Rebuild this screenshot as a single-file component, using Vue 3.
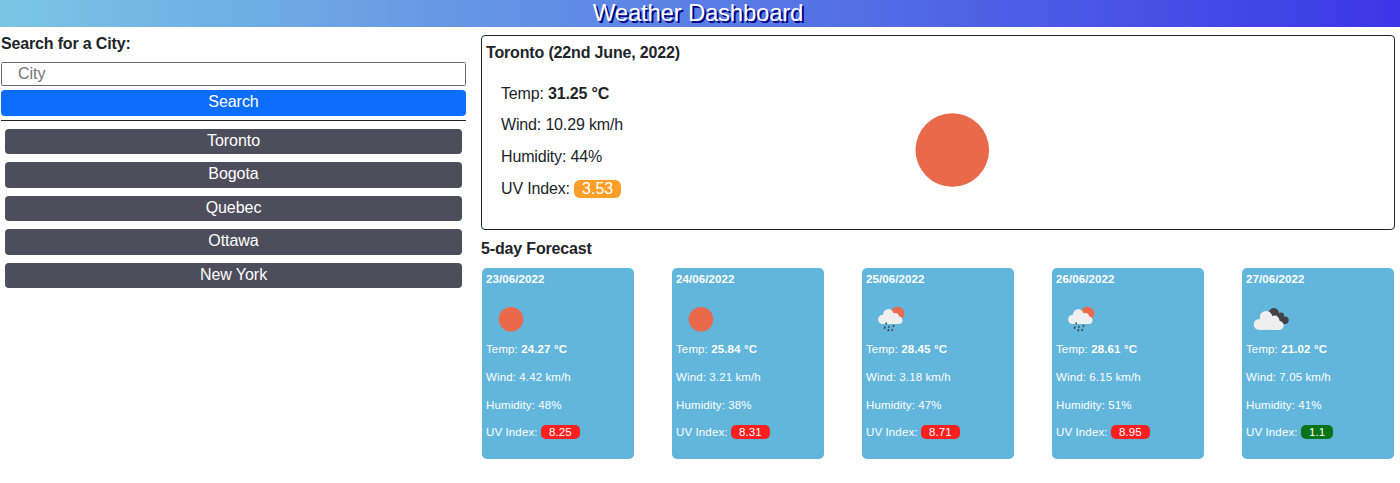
<script setup>
const cities = ['Toronto', 'Bogota', 'Quebec', 'Ottawa', 'New York']

const forecast = [
  { date: '23/06/2022', icon: 'sun', temp: '24.27', wind: '4.42', humidity: 48, uv: '8.25', level: 'high' },
  { date: '24/06/2022', icon: 'sun', temp: '25.84', wind: '3.21', humidity: 38, uv: '8.31', level: 'high' },
  { date: '25/06/2022', icon: 'rain', temp: '28.45', wind: '3.18', humidity: 47, uv: '8.71', level: 'high' },
  { date: '26/06/2022', icon: 'rain', temp: '28.61', wind: '6.15', humidity: 51, uv: '8.95', level: 'high' },
  { date: '27/06/2022', icon: 'clouds', temp: '21.02', wind: '7.05', humidity: 41, uv: '1.1', level: 'low' },
]
</script>

<template>
  <div class="page">
    <header class="header"><h1>Weather Dashboard</h1></header>
    <main class="layout">
      <aside class="sidebar">
        <h2 class="heading">Search for a City:</h2>
        <input class="city-input" type="text" placeholder="City" />
        <button class="search">Search</button>
        <div class="history">
          <button v-for="city in cities" :key="city" class="city">{{ city }}</button>
        </div>
      </aside>

      <div class="content">
        <section class="today">
          <h2 class="heading">Toronto (22nd June, 2022)</h2>
          <div class="today-body">
            <div class="stats">
              <p>Temp: <b>31.25 °C</b></p>
              <p>Wind: 10.29 km/h</p>
              <p>Humidity: 44%</p>
              <p>UV Index: <span class="uv moderate">3.53</span></p>
            </div>
            <svg class="today-icon" viewBox="0 0 75 75"><circle cx="37.3" cy="37" r="36.8" fill="#e96a4a" /></svg>
          </div>
        </section>

        <h2 class="heading forecast-title">5-day Forecast</h2>
        <section class="cards">
          <article v-for="day in forecast" :key="day.date" class="card">
            <h3>{{ day.date }}</h3>
            <svg class="icon" viewBox="0 0 50 50">
              <circle v-if="day.icon === 'sun'" cx="25" cy="25.2" r="12.3" fill="#e96a4a" />
              <g v-else-if="day.icon === 'rain'">
                <circle cx="31.5" cy="19.6" r="6.9" fill="#e96a4a" />
                <g fill="#f0eff0">
                  <circle cx="16.7" cy="25.4" r="4.6" />
                  <circle cx="22.4" cy="20.2" r="5.2" />
                  <circle cx="29.2" cy="22.8" r="3.9" />
                  <circle cx="32.8" cy="26.3" r="3.7" />
                  <path d="M16.7 22h16v8h-16z" />
                </g>
                <path
                  d="M20.5 28.6l-.6 1.6M19.2 32.4l-1 2.4M23.3 31.9l-.7 1.8M22.7 35.2l-.7 2M27.9 30.9l-.8 2M26.6 35l-.8 2"
                  fill="none" stroke="#3d3d3f" stroke-width="1.4"
                />
              </g>
              <g v-else>
                <g fill="#434345">
                  <circle cx="27.8" cy="19.3" r="5.2" />
                  <circle cx="34.9" cy="21.6" r="3.2" />
                  <circle cx="39" cy="26.3" r="3.7" />
                  <path d="M28 20l7-1 3 9 .5 2-6-2z" />
                </g>
                <g fill="#f0eff0">
                  <circle cx="13.2" cy="30.4" r="5.5" />
                  <circle cx="20.1" cy="23.3" r="6.3" />
                  <circle cx="28.7" cy="26.3" r="4.7" />
                  <circle cx="33.3" cy="31.5" r="4.4" />
                  <path d="M13.2 26h20v9.9h-20z" />
                </g>
              </g>
            </svg>
            <div class="stats small">
              <p>Temp: <b>{{ day.temp }} °C</b></p>
              <p>Wind: {{ day.wind }} km/h</p>
              <p>Humidity: {{ day.humidity }}%</p>
              <p>UV Index: <span class="uv" :class="day.level">{{ day.uv }}</span></p>
            </div>
          </article>
        </section>
      </div>
    </main>
  </div>
</template>

<style>
body {
  margin: 0;
  background: #fff;
}
</style>

<style scoped>
* {
  box-sizing: border-box;
}
.page {
  color: #212529;
  font: 16px/24px "Liberation Sans", Arial, sans-serif;
}
h1, h2, h3, p {
  margin: 0;
}
.header {
  height: 27px;
  background: linear-gradient(to right, #7ac6e4, #3b36e6);
  text-align: center;
}
.header h1 {
  padding-right: 4px;
  color: #fff;
  font-size: 24px;
  font-weight: 400;
  letter-spacing: -0.24px;
  line-height: 26px;
  text-shadow: 2px 2px 0 #000080;
}
.layout {
  display: flex;
  gap: 15px;
  padding: 0 5px 0 1px;
}
.sidebar {
  width: 465px;
  padding-top: 5px;
}
.heading {
  font-size: 16px;
  font-weight: 700;
  letter-spacing: -0.16px;
  line-height: 24px;
}
.city-input {
  display: block;
  width: 100%;
  height: 24px;
  margin-top: 6px;
  padding: 0 16px;
  border: 1px solid #6b6b6b;
  border-radius: 1.5px;
  background: #fff;
  font: inherit;
}
.city-input::placeholder {
  color: #757575;
  opacity: 1;
}
button {
  display: block;
  border: 0;
  border-radius: 4px;
  color: #fff;
  font: inherit;
  letter-spacing: -0.05px;
  text-align: center;
}
.search {
  width: 100%;
  height: 26px;
  margin-top: 4px;
  padding: 0 0 2px;
  background: #0d6efd;
}
.history {
  display: flex;
  flex-direction: column;
  gap: 8px;
  margin-top: 4px;
  padding: 7.75px 4px 0;
  border-top: 1px solid #212529;
}
.city {
  height: 25.5px;
  padding: 0 0 1.5px;
  background: #4e4d5c;
}
.content {
  flex: 1;
  padding-top: 8px;
}
.today {
  height: 195px;
  padding: 5px 4px;
  border: 1px solid #212529;
  border-radius: 4px;
}
.today-body {
  display: grid;
  grid-template-columns: 414px 75px;
  padding: 16.7px 0 0 15px;
}
.stats {
  display: grid;
  grid-auto-rows: 31.7px;
  letter-spacing: -0.16px;
}
.today-icon {
  width: 75px;
  height: 75px;
  margin-top: 31px;
}
.uv {
  display: inline-block;
  padding: 0 8px;
  border-radius: 6px;
  color: #fff;
  letter-spacing: 0;
  line-height: 18px;
}
.moderate {
  background: #ff9f2a;
}
.high {
  background: #ff1f1f;
}
.low {
  background: #0a7518;
}
.forecast-title {
  margin-top: 7px;
}
.cards {
  display: flex;
  justify-content: space-between;
  margin-top: 7px;
  padding: 0 1px;
}
.card {
  width: 152px;
  height: 191px;
  padding: 2px 4px;
  border-radius: 5px;
  background: #62b6dc;
  color: #fff;
}
.card h3 {
  font-size: 11.5px;
  font-weight: 700;
  letter-spacing: 0.08px;
  line-height: 18px;
}
.icon {
  display: block;
  width: 50px;
  height: 50px;
  margin-top: 6px;
}
.small {
  grid-auto-rows: 27.8px;
  margin-top: -4px;
  font-size: 11.5px;
  letter-spacing: 0.12px;
  line-height: 18px;
}
.small .uv {
  border-radius: 5px;
  letter-spacing: 0.1px;
  line-height: 14px;
}
</style>
